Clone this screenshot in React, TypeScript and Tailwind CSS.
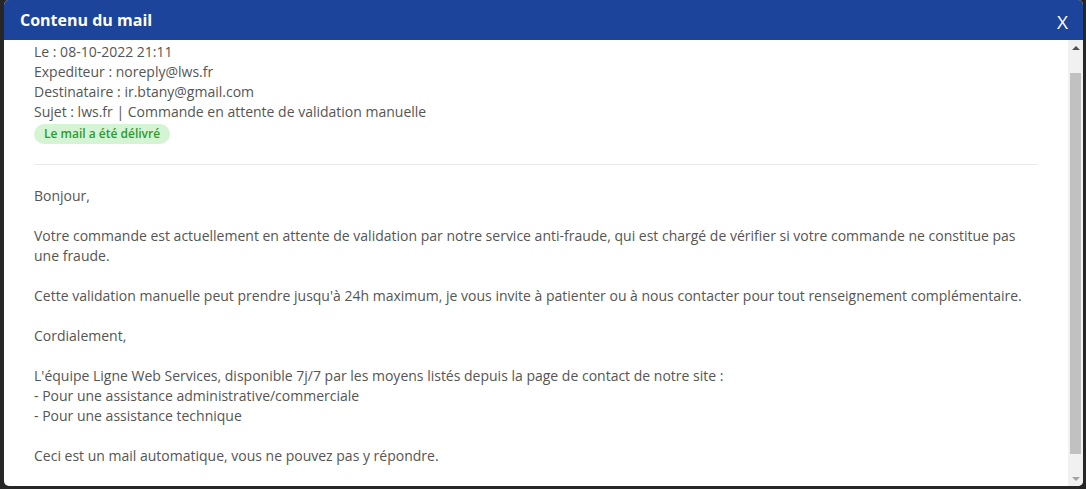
import React from 'react';

// Delivery status pill
const StatusBadge: React.FC<{ label: string }> = ({ label }) => (
  <span className="inline-block rounded-full bg-[#d5f4d3] px-[10px] text-[12px] font-semibold leading-[20px] text-[#2f9a2f]">
    {label}
  </span>
);

// Fake classic scrollbar on the right of the modal body
const Scrollbar: React.FC = () => (
  <div className="flex w-[15px] shrink-0 flex-col bg-[#f1f1f1]">
    <div className="flex h-[15px] items-center justify-center">
      <div className="h-0 w-0 border-x-[4px] border-b-[4px] border-x-transparent border-b-[#505050]" />
    </div>
    <div className="mx-[2px] mt-[18px] mb-[17px] flex-1 bg-[#c1c1c1]" />
    <div className="flex h-[15px] items-center justify-center">
      <div className="h-0 w-0 border-x-[4px] border-t-[4px] border-x-transparent border-t-[#a3a3a3]" />
    </div>
  </div>
);

export default function App() {
  const headers = [
    'Le : 08-10-2022 21:11',
    'Expediteur : noreply@lws.fr',
    'Destinataire : ir.btany@gmail.com',
    'Sujet : lws.fr | Commande en attente de validation manuelle',
  ];

  return (
    <div
      className="flex h-[489px] w-[1086px] bg-[#262626] pb-[3px] pl-[4px] pr-[3px]"
      style={{ fontFamily: '"Open Sans", "Liberation Sans", sans-serif' }}
    >
      <div className="flex flex-1 flex-col overflow-hidden rounded-[5px] bg-white">
        <div className="flex h-[40px] shrink-0 items-center justify-between bg-[#1c449b] pl-[16px] pr-[15px]">
          <h2 className="text-[16px] font-bold text-white">Contenu du mail</h2>
          <span className="mt-[4px] text-[19px] leading-none text-white">X</span>
        </div>

        <div className="flex min-h-0 flex-1">
          <div className="flex-1 pl-[30px] pr-[30px] pt-[2px] text-[14px] leading-[20px] text-[#555555]">
            {headers.map((h) => (
              <div key={h}>{h}</div>
            ))}
            <div className="mt-px">
              <StatusBadge label="Le mail a été délivré" />
            </div>
            <hr className="mt-[20px] border-t border-[#ebebeb]" />

            <div className="mt-[21px]">
              Bonjour,
              <br />
              <br />
              Votre commande est actuellement en attente de validation par notre service anti-fraude, qui est chargé de vérifier si votre commande ne constitue pas une fraude.
              <br />
              <br />
              Cette validation manuelle peut prendre jusqu'à 24h maximum, je vous invite à patienter ou à nous contacter pour tout renseignement complémentaire.
              <br />
              <br />
              Cordialement,
              <br />
              <br />
              L'équipe Ligne Web Services, disponible 7j/7 par les moyens listés depuis la page de contact de notre site :
              <br />
              - Pour une assistance administrative/commerciale
              <br />
              - Pour une assistance technique
              <br />
              <br />
              Ceci est un mail automatique, vous ne pouvez pas y répondre.
            </div>
          </div>
          <Scrollbar />
        </div>
      </div>
    </div>
  );
}
